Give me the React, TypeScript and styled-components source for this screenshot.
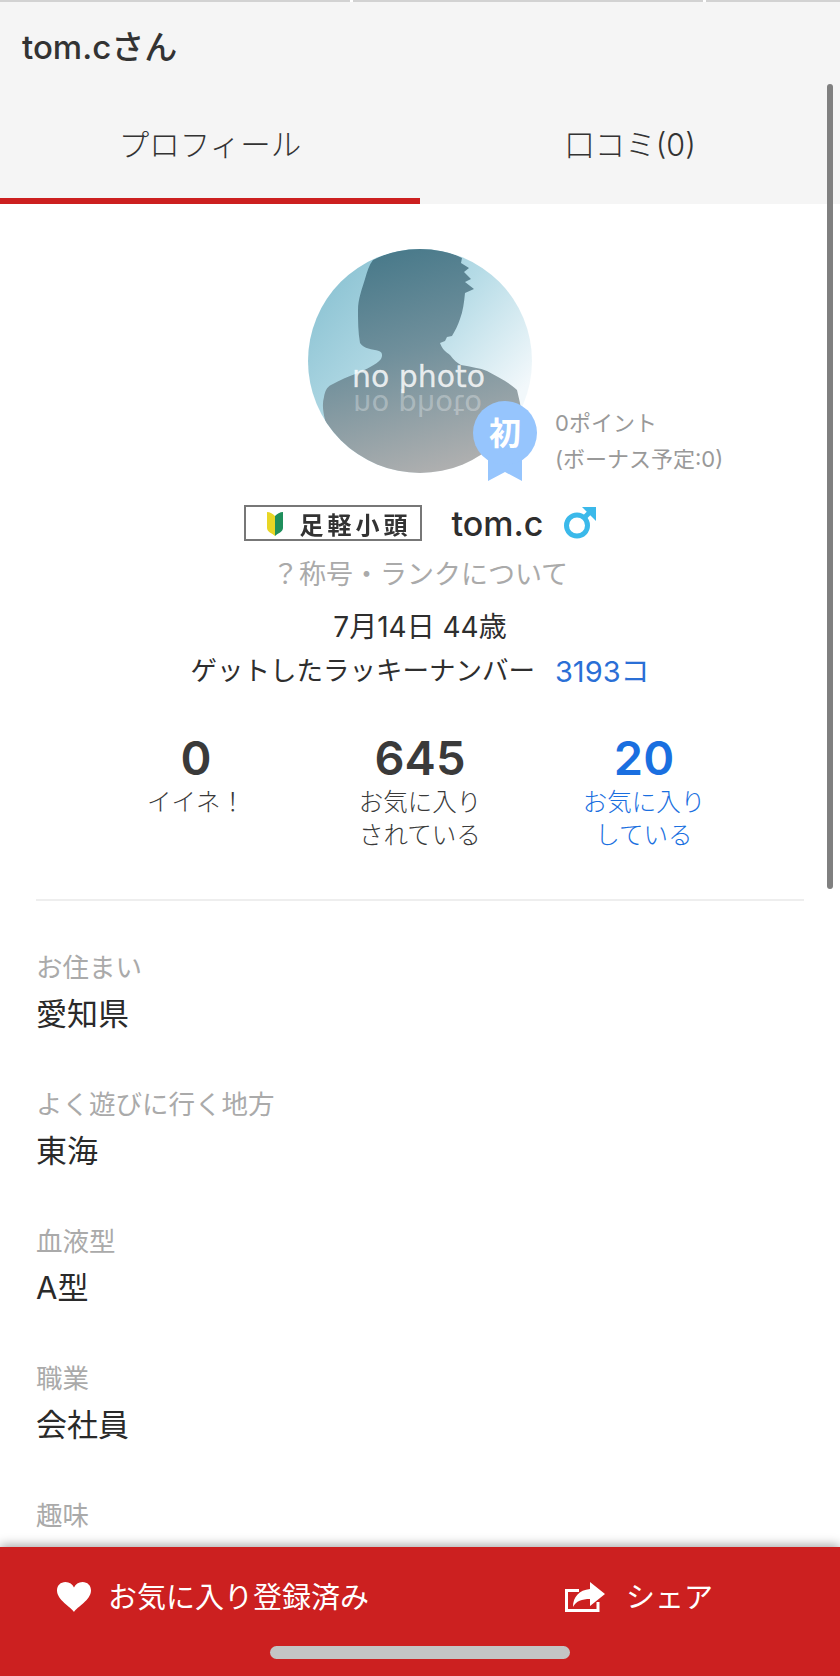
import styled, { createGlobalStyle } from "styled-components";

const FONT = `Inter, "Noto Sans CJK JP", sans-serif`;

const GlobalStyle = createGlobalStyle`
  html, body {
    margin: 0;
    padding: 0;
    background: #fff;
    font-family: ${FONT};
  }
`;

const INFO_ITEMS = [
  { label: "お住まい", value: "愛知県" },
  { label: "よく遊びに行く地方", value: "東海" },
  { label: "血液型", value: "A型" },
  { label: "職業", value: "会社員" },
  { label: "趣味", value: "" },
];

const Avatar = () => (
  <AvatarImage viewBox="0 0 224 224" aria-label="no photo">
    <defs>
      <linearGradient id="avatarBg" x1="0.1" y1="0.1" x2="0.85" y2="0.75">
        <stop offset="0" stopColor="#8cc3d3" />
        <stop offset="0.5" stopColor="#b5dbe6" />
        <stop offset="1" stopColor="#f2f8fb" />
      </linearGradient>
      <linearGradient id="avatarBody" x1="0.3" y1="0" x2="0.6" y2="1">
        <stop offset="0" stopColor="#467889" />
        <stop offset="0.45" stopColor="#6f8f9b" />
        <stop offset="1" stopColor="#b0b0b0" />
      </linearGradient>
      <clipPath id="avatarClip">
        <circle cx="112" cy="112" r="112" />
      </clipPath>
    </defs>
    <g clipPath="url(#avatarClip)">
      <rect width="224" height="224" fill="url(#avatarBg)" />
      <path
        fill="url(#avatarBody)"
        d="M65 11 C80 4 95 -2 112 -2 C128 -2 142 3 154 9 L153 14 L161 19 L156 23 L163 30 L157 33 L166 40 L157 44 C156 54 155 62 152 70 C150 76 147 82 144 87 L139 88 L137 92 L132 94 C134 100 138 103 142 106 C146 111 149 114 153 116 C163 118 172 119 179 122 C190 128 202 134 209 141 L212 154 L224 224 L0 224 L17 171 C15 162 14 155 16 148 C17 142 19 138 23 136 C32 131 41 127 50 124 C58 120 68 116 73 110 C75 106 74 103 71 102 C64 100 56 100 52 94 C50 83 50 72 50 61 C50 50 54 40 57 30 C59 23 61 16 65 11 Z"
      />
      <text x="44" y="138" fontFamily="DejaVu Sans" fontSize="30" textLength="133" lengthAdjust="spacingAndGlyphs" fill="#fff" fillOpacity="0.82" stroke="#fff" strokeOpacity="0.5" strokeWidth="0.4">
        no photo
      </text>
      <text x="45" y="-146" transform="scale(1,-1)" fontFamily="DejaVu Sans" fontSize="28" textLength="129" lengthAdjust="spacingAndGlyphs" fill="#fff" fillOpacity="0.3">
        no photo
      </text>
    </g>
  </AvatarImage>
);

const RankBadge = () => (
  <BadgeIcon viewBox="0 0 64 80">
    <path d="M15 40H49V80L32 71L15 80Z" fill="#96c5fd" />
    <circle cx="32" cy="32" r="32" fill="#96c5fd" />
    <text x="32" y="44" textAnchor="middle" fontFamily="Noto Sans CJK JP" fontWeight="700" fontSize="32" fill="#fff">
      初
    </text>
  </BadgeIcon>
);

const BeginnerMark = () => (
  <svg width="16" height="25" viewBox="0 0 16 25">
    <path d="M0 1C3 1 6 3 8 5V25C5 22 0 21 0 17Z" fill="#e8d625" />
    <path d="M16 1C13 1 10 3 8 5V25C11 22 16 21 16 17Z" fill="#1f8f5c" />
  </svg>
);

const MaleIcon = () => (
  <svg width="32" height="32" viewBox="0 0 32 32">
    <circle cx="13" cy="18.500" r="10.500" fill="none" stroke="#3bb9ea" strokeWidth="5" />
    <path d="M20 11L28 3" stroke="#3bb9ea" strokeWidth="5" fill="none" />
    <path d="M18 0H32V14L27 9L23 5Z" fill="#3bb9ea" />
  </svg>
);

const HeartIcon = () => (
  <svg width="36" height="30" viewBox="0 0 36 30">
    <path
      fill="#fff"
      d="M18 30C15 25 1 18 1 8.500C1 3.500 4.500 0 9.500 0C13.500 0 16.500 2.200 18 5.500C19.500 2.200 22.500 0 26.500 0C31.500 0 35 3.500 35 8.500C35 18 21 25 18 30Z"
    />
  </svg>
);

const ShareIcon = () => (
  <svg width="40" height="30" viewBox="0 0 40 30">
    <path d="M14 8.500H1.500V28.500H33V20" fill="none" stroke="#fff" strokeWidth="3" />
    <path fill="#fff" d="M25 0L40 12L25 24V17C17 17 11 19 8 25C8 15 14 8 25 7Z" />
  </svg>
);

const App = () => {
  return (
    <>
      <GlobalStyle />
      <Page>
        <TopLines>
          <span />
          <span />
          <span />
        </TopLines>
        <Header>
          <PageTitle>tom.cさん</PageTitle>
          <Tabs>
            <Tab $active>プロフィール</Tab>
            <Tab>口コミ(0)</Tab>
          </Tabs>
        </Header>

        <Content>
          <AvatarRow>
            <AvatarWrapper>
              <Avatar />
              <RankBadge />
            </AvatarWrapper>
            <Points>
              <div>0ポイント</div>
              <div>(ボーナス予定:0)</div>
            </Points>
          </AvatarRow>

          <NameRow>
            <RankTitle>
              <BeginnerMark />
              <RankName>足軽小頭</RankName>
            </RankTitle>
            <UserName>tom.c</UserName>
            <MaleIcon />
          </NameRow>

          <RankNote>？称号・ランクについて</RankNote>
          <Birthday>7月14日 44歳</Birthday>
          <LuckyRow>
            <span>ゲットしたラッキーナンバー</span>
            <LuckyCount>3193コ</LuckyCount>
          </LuckyRow>

          <Stats>
            <Stat>
              <StatNumber>0</StatNumber>
              <StatLabel>イイネ！</StatLabel>
            </Stat>
            <Stat>
              <StatNumber>645</StatNumber>
              <StatLabel>
                お気に入り
                <br />
                されている
              </StatLabel>
            </Stat>
            <Stat $link>
              <StatNumber>20</StatNumber>
              <StatLabel>
                お気に入り
                <br />
                している
              </StatLabel>
            </Stat>
          </Stats>

          <Divider />

          <InfoList>
            {INFO_ITEMS.map((item) => (
              <InfoItem key={item.label}>
                <InfoLabel>{item.label}</InfoLabel>
                <InfoValue>{item.value}</InfoValue>
              </InfoItem>
            ))}
          </InfoList>
        </Content>

        <BottomBar>
          <BottomActions>
            <Action $width={509}>
              <HeartIcon />
              <ActionLabel>お気に入り登録済み</ActionLabel>
            </Action>
            <Action>
              <ShareIcon />
              <ActionLabel $wide>シェア</ActionLabel>
            </Action>
          </BottomActions>
          <HomeIndicator />
        </BottomBar>
        <ScrollThumb />
      </Page>
    </>
  );
};

export default App;

const Page = styled.div`
  position: relative;
  display: flex;
  flex-direction: column;
  width: 840px;
  height: 1676px;
  overflow: hidden;
  background: #fff;
  color: #2e2e2e;
`;

const TopLines = styled.div`
  display: grid;
  grid-template-columns: repeat(3, 350px);
  gap: 3px;
  height: 2px;
  flex: none;

  span {
    background: #d2d2d2;
  }
`;

const Header = styled.header`
  flex: none;
  background: #f5f5f5;
`;

const PageTitle = styled.div`
  height: 90px;
  padding-left: 22px;
  line-height: 90px;
  font-size: 33px;
  font-weight: 500;
  color: #333;
`;

const Tabs = styled.nav`
  display: grid;
  grid-template-columns: 420px 420px;
`;

const Tab = styled.div<{ $active?: boolean }>`
  height: 112px;
  box-sizing: border-box;
  padding-bottom: 5px;
  display: flex;
  align-items: center;
  justify-content: center;
  font-size: 30.500px;
  font-weight: 300;
  color: #333;
  border-bottom: 6px solid ${({ $active }) => ($active ? "#cc2020" : "transparent")};
`;

const Content = styled.main`
  flex: 1;
  min-height: 0;
  overflow: hidden;
  padding-top: 45px;
`;

const ScrollThumb = styled.div`
  position: absolute;
  top: 84px;
  right: 7px;
  width: 6px;
  height: 805px;
  border-radius: 3px;
  background: #808080;
`;

const AvatarRow = styled.div`
  display: grid;
  grid-template-columns: 1fr 224px 1fr;
`;

const AvatarWrapper = styled.div`
  position: relative;
  grid-column: 2;
  width: 224px;
  height: 224px;
`;

const AvatarImage = styled.svg`
  display: block;
  width: 224px;
  height: 224px;
`;

const BadgeIcon = styled.svg`
  position: absolute;
  left: 165px;
  top: 152px;
  width: 64px;
  height: 80px;
`;

const Points = styled.div`
  align-self: end;
  margin-left: 23px;
  margin-bottom: -4px;
  font-size: 22px;
  line-height: 36px;
  color: #999;
  white-space: nowrap;
`;

const NameRow = styled.div`
  display: flex;
  align-items: center;
  justify-content: center;
  height: 36px;
  margin-top: 32px;
`;

const RankTitle = styled.div`
  display: flex;
  align-items: center;
  box-sizing: border-box;
  width: 178px;
  height: 36px;
  padding-left: 21px;
  border: 2px solid #777;
`;

const RankName = styled.span`
  margin-left: 17px;
  font-size: 24px;
  font-weight: 700;
  letter-spacing: 4px;
  color: #333;
  filter: blur(0.7px);
  white-space: nowrap;
`;

const UserName = styled.div`
  margin: 0 21px 0 30px;
  font-size: 34px;
  font-weight: 500;
  color: #2e2e2e;
`;

const RankNote = styled.div`
  margin-top: 14px;
  line-height: 40px;
  font-size: 27px;
  text-align: center;
  color: #aaa;
`;

const Birthday = styled.div`
  margin-top: 12px;
  line-height: 40px;
  font-size: 28px;
  text-align: center;
  color: #2e2e2e;
`;

const LuckyRow = styled.div`
  display: flex;
  justify-content: center;
  gap: 20px;
  margin-top: 3px;
  line-height: 40px;
  font-size: 26.500px;
  color: #2e2e2e;
`;

const LuckyCount = styled.span`
  margin: 2px 0 -2px;
  font-size: 29px;
  color: #2a6fd6;
`;

const Stats = styled.div`
  display: grid;
  grid-template-columns: repeat(3, 224px);
  justify-content: center;
  margin-top: 40px;
`;

const Stat = styled.div<{ $link?: boolean }>`
  text-align: center;
  color: ${({ $link }) => ($link ? "#1a6fe0" : "#3a3a3a")};
`;

const StatNumber = styled.div`
  height: 56px;
  line-height: 56px;
  font-size: 47px;
  font-weight: 600;
`;

const StatLabel = styled.div`
  height: 66px;
  line-height: 33px;
  font-size: 24.500px;
  font-weight: 300;
`;

const Divider = styled.hr`
  height: 2px;
  margin: 47px 36px 0;
  border: 0;
  background: #eee;
`;

const InfoList = styled.div`
  display: flex;
  flex-direction: column;
  gap: 50px;
  padding: 49px 36px 0;
`;

const InfoItem = styled.section``;

const InfoLabel = styled.div`
  line-height: 34px;
  font-size: 26.500px;
  color: #aaa;
`;

const InfoValue = styled.div`
  min-height: 46px;
  margin-top: 7px;
  line-height: 46px;
  font-size: 31px;
  color: #2a2a2a;
`;

const BottomBar = styled.footer`
  position: relative;
  flex: none;
  height: 129px;
  background: #cc2020;
  box-shadow: 0 -2px 10px rgba(0, 0, 0, 0.35);
`;

const BottomActions = styled.div`
  display: flex;
  align-items: center;
  height: 99px;
  padding-left: 56px;
`;

const Action = styled.div<{ $width?: number }>`
  display: flex;
  align-items: center;
  width: ${({ $width }) => ($width ? `${$width}px` : "auto")};
  color: #fff;
`;

const ActionLabel = styled.span<{ $wide?: boolean }>`
  margin-left: ${({ $wide }) => ($wide ? "21px" : "16px")};
  margin-bottom: 4px;
  font-size: 29px;
  white-space: nowrap;
`;

const HomeIndicator = styled.div`
  width: 300px;
  height: 13px;
  margin: 0 auto;
  border-radius: 7px;
  background: #c4c4c4;
`;
